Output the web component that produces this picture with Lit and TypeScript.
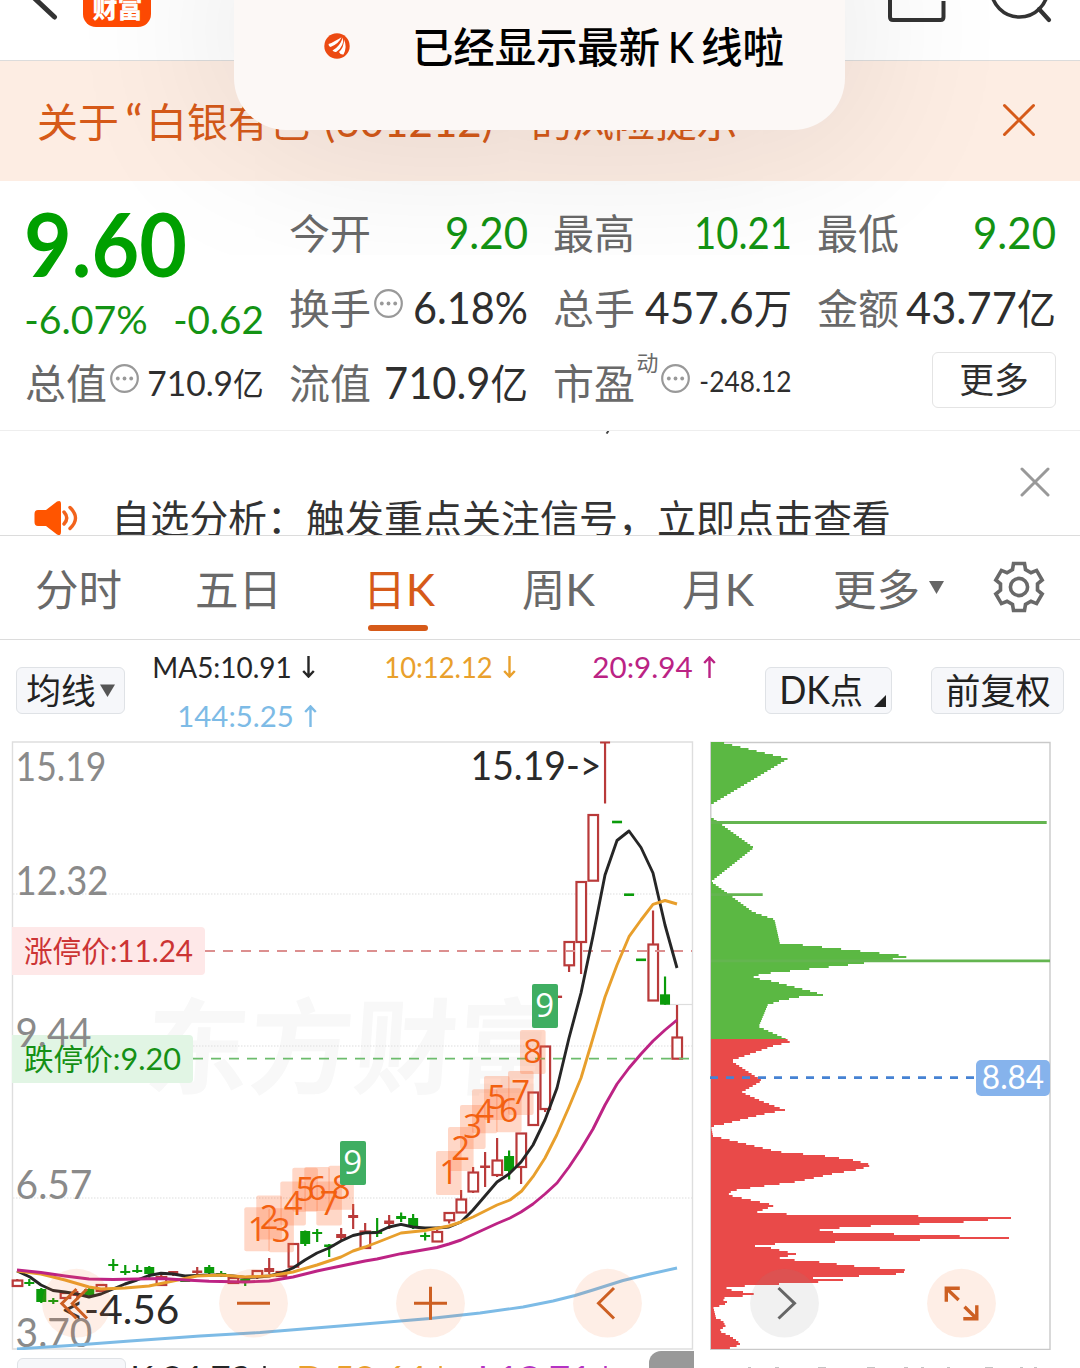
import { LitElement, html, svg, css, nothing } from 'lit';
import { customElement } from 'lit/decorators.js';

interface FitOptions {
  latin?: number;
  cjk?: number;
  weight?: number;
  cls?: string;
}

/** Splits a label into Latin and Han runs, each with its own font size. */
const runs = (text: string, latin: number, cjk: number) =>
  (text.match(/[\u3000-\u9fff\uff00-\uffef]+|[^\u3000-\u9fff\uff00-\uffef]+/g) ?? []).map((part) => {
    const size = /[\u3000-\u9fff\uff00-\uffef]/.test(part) ? cjk : latin;
    return svg`<tspan font-size=${size}>${part}</tspan>`;
  });

/** A label of a fixed width whose baseline is the bottom edge of its box. */
const fit = (text: string, width: number, o: FitOptions = {}) => {
  const latin = o.latin ?? 45;
  const cjk = o.cjk ?? 40.5;
  const pad = latin * 0.022;
  const h = Math.round(latin * 0.72);
  return html`<svg class="fit ${o.cls ?? ''}" width=${width} height=${h}><text x=${-pad} y=${h} font-weight=${o.weight ?? 400} textLength=${width + pad * 2} lengthAdjust="spacingAndGlyphs">${runs(text, latin, cjk)}</text></svg>`;
};

/** The same fitted label, placed at a point of the chart canvas. */
const label = (text: string, x1: number, x2: number, y: number, latin: number, fill: string, cjk = latin) => {
  const pad = latin * 0.035;
  return svg`<text x=${x1 - pad} y=${y} fill=${fill} textLength=${x2 - x1 + pad * 2} lengthAdjust="spacingAndGlyphs">${runs(text, latin, cjk)}</text>`;
};

const arrow = (down: boolean, cls: string) => html`<svg class="arrow ${cls}" width="13" height="22" viewBox="0 0 13 22">
  <path d=${down ? 'M6.5 0V20.5M1.2 15L6.5 20.6L11.8 15' : 'M6.5 22V1.5M1.2 7L6.5 1.4L11.8 7'} fill="none" stroke="currentColor" stroke-width="2.4"/></svg>`;

const dots = html`<svg class="dots" width="29" height="29" viewBox="0 0 29 29">
  <circle cx="14.5" cy="14.5" r="13.3" fill="none" stroke="#999" stroke-width="2.2"/>
  <circle cx="7.8" cy="14.5" r="1.9" fill="#999"/><circle cx="14.5" cy="14.5" r="1.9" fill="#999"/><circle cx="21.2" cy="14.5" r="1.9" fill="#999"/></svg>`;

type Kind = 'h' | 's' | 'g';
/** kind (hollow red, solid red, green), high, body top, body bottom, low */
type Candle = [Kind, number, number, number, number];
const CANDLES: Candle[] = [
  ['h', 1279, 1280.5, 1286, 1287], ['g', 1279, 1282, 1284, 1286], ['g', 1288, 1289, 1302, 1303], ['g', 1298, 1300, 1302, 1304],
  ['h', 1292, 1293, 1298, 1299], ['s', 1291, 1293, 1296, 1300], ['g', 1288, 1289, 1295, 1296], ['h', 1284, 1285, 1291, 1291],
  ['g', 1259, 1264, 1266, 1271], ['g', 1265, 1271, 1273, 1275], ['g', 1265, 1270, 1272, 1273], ['g', 1266, 1267, 1274, 1278],
  ['h', 1274, 1277, 1285, 1285], ['s', 1271, 1271, 1274, 1276], ['g', 1277, 1279, 1282, 1282], ['s', 1267, 1270.5, 1273, 1275],
  ['g', 1265, 1267, 1273, 1274], ['g', 1271, 1273, 1276, 1277], ['h', 1277, 1278, 1283, 1283], ['g', 1276, 1279, 1281, 1286],
  ['h', 1270, 1271, 1277, 1279], ['s', 1258, 1268, 1272, 1274], ['h', 1271, 1272, 1276, 1276], ['h', 1243.5, 1244, 1266.7, 1268],
  ['g', 1230.5, 1231, 1244, 1246], ['g', 1229, 1232, 1234, 1242], ['g', 1244, 1244.5, 1247, 1257], ['s', 1228, 1234, 1238, 1240],
  ['s', 1204, 1215, 1218, 1229], ['h', 1223, 1231.5, 1248, 1249], ['g', 1218, 1231, 1234, 1237], ['s', 1215, 1220.5, 1224, 1229],
  ['g', 1212.5, 1216, 1219, 1222], ['g', 1214, 1218, 1227, 1229], ['g', 1232.5, 1235, 1237, 1240.5], ['h', 1230, 1232, 1241.5, 1242],
  ['h', 1212, 1213, 1220.3, 1223.5], ['h', 1190, 1199.5, 1212.5, 1213], ['h', 1167, 1172.5, 1191.5, 1193], ['s', 1152, 1165.5, 1168, 1187],
  ['h', 1138, 1160.5, 1175, 1177], ['g', 1150.5, 1156, 1171, 1179.5], ['h', 1133, 1133.5, 1167, 1184], ['h', 1092, 1092.5, 1125, 1125],
  ['h', 1046, 1046.5, 1109, 1112], ['s', 996, 995.6, 998, 997], ['h', 941.5, 942, 965.3, 972], ['h', 881, 882, 942, 974],
  ['h', 814.5, 815, 880.7, 881], ['s', 742, 741.5, 743.5, 803.5], ['g', 821, 820.7, 823.3, 823], ['g', 894, 893.4, 896, 895],
  ['g', 959, 958.5, 961.1, 960], ['h', 910.5, 944.5, 1000.5, 1001], ['g', 976.5, 994.3, 1004.7, 1004.7], ['h', 1005, 1037.5, 1058.7, 1059],
];

const MA5 = '17,1271 30,1277 41,1285 53,1290.5 65,1292 77,1294 89,1297 101,1294 113,1289 125,1284 137,1280 149,1275.5 161,1273.3 173,1274 185,1276 197,1275.5 209,1275 221,1275 233,1276 245,1277.5 257,1277 269,1276 281,1273 293,1268 305,1260 317,1253 329,1248 341,1241 353,1235.5 365,1232.8 377,1232.5 389,1227 401,1224.3 413,1227 425,1228 437,1228 449,1227 461,1222 473,1210 485,1196 497,1182 509,1174 521,1162 533,1145 545,1120 557,1088 569,1038 581,993 593,936 605,875 617,840.5 629,831 641,847.5 653,873 665,925 677,968';
const MA10 = '17,1271 41,1274 65,1280 89,1287 101,1289 125,1288 149,1286 173,1281 197,1276 221,1275 245,1277 269,1276 293,1272 317,1265 341,1257 353,1251 365,1247 377,1242.5 401,1233 425,1230.5 449,1226 461,1222 473,1217 485,1211 497,1205 510,1200 521.7,1191 533,1176.7 545,1158 556.7,1135 569,1107 581,1078 593,1038 605,997 617,965 629,936.7 641,920 653,904.3 665,900.5 677,904';
const MA20 = '17,1270 41,1272.5 65,1276 89,1279 113,1279.5 137,1279 161,1278.5 185,1280 209,1281.3 245,1282 269,1281 293,1277 317,1271 341,1266 365,1261 377,1259 401,1253.7 437,1247.5 449,1244 461,1240 473,1234.5 497,1223.5 510,1218 521,1212 533,1204 545,1194 557,1183 569,1167 581,1149 593,1129 605,1105 617,1084 629,1068 641,1054 653,1041 665,1030 677,1020';
const MA144 = '17,1349 70,1345.5 130,1341 200,1336 260,1332.5 340,1326 430,1318.5 480,1313 523,1307 553,1301 575,1295.5 593,1290 623,1280.5 650,1274 677,1268';

/** Sequence marks: digit, left edge, top edge. */
const MARKS: [string, number, number][] = [
  ['1', 244.3, 1207.3], ['2', 256.3, 1195.5], ['3', 268.3, 1208.3], ['4', 280.3, 1181.5], ['5', 292.3, 1167.7], ['6', 304.3, 1167], ['7', 316.3, 1181.5], ['8', 328.3, 1165.7], ['9', 340, 1141],
  ['1', 436, 1151], ['2', 448, 1127], ['3', 460, 1105], ['4', 472, 1089.3], ['5', 484, 1076], ['6', 496, 1088.3], ['7', 508, 1071], ['8', 520, 1030], ['9', 532, 984],
];

/** Chip distribution outline: price row (y) and bar length. */
const CHIPS: [number, number][] = [
  [742, 9], [758.7, 77], [804.7, 0], [817, 0], [847.7, 43], [881.7, 0], [883, 2], [893, 16], [912, 42], [919.5, 63.5], [944, 69], [944.6, 88], [956.3, 200],
  [958.7, 184], [963, 153], [965, 137], [974, 50], [977.7, 41], [980.7, 59], [992, 103], [995, 112], [997, 88], [1001, 68], [1005, 56.7], [1026.7, 47.7], [1036.7, 70],
  [1041.7, 80], [1046, 62], [1053, 42], [1060.7, 20], [1080.7, 51], [1092.3, 30.7], [1101.7, 52], [1110, 74], [1114.3, 52], [1125, 9], [1126.5, 0],
  [1136, 2], [1151.7, 67], [1156, 114], [1160, 142], [1165, 161], [1169.3, 149], [1174, 121], [1181.7, 86], [1186.7, 48], [1190.7, 21], [1195, 17], [1205.3, 64],
  [1212.5, 45], [1213.7, 50], [1215, 161], [1218, 300], [1220.7, 269], [1223, 240], [1225, 177], [1227.5, 134], [1229.5, 112], [1231, 102], [1233, 142], [1235, 224],
  [1238, 298], [1240, 209], [1242, 124], [1244, 64], [1246, 44], [1248, 60], [1254, 85], [1258.7, 66], [1261.5, 104], [1264.5, 130], [1267, 152], [1269.5, 194],
  [1272, 193], [1274, 185], [1276, 148], [1278, 102], [1280, 132], [1282.5, 101], [1284.5, 57], [1286.5, 26], [1288.5, 12], [1292, 32], [1294.8, 47], [1297, 19],
  [1299, 8], [1301, 17], [1304, 14], [1308, 2.5], [1318, 5], [1321, 12], [1326, 14.5], [1331, 8], [1336, 19], [1340, 25], [1343.7, 29.5], [1346.5, 24.7], [1349, 15],
];
const chipPath = (from: number, to: number) => {
  let d = `M711 ${from}`;
  for (let y = from; y < to; y += 2) {
    const mid = y + 1;
    let i = CHIPS.findIndex((p) => p[0] > mid);
    if (i < 1) i = i === 0 ? 1 : CHIPS.length - 1;
    const [y0, w0] = CHIPS[i - 1];
    const [y1, w1] = CHIPS[i];
    const w = Math.max(0, w0 + ((w1 - w0) * (mid - y0)) / (y1 - y0));
    d += `H${(711 + w).toFixed(1)}V${Math.min(y + 2, to)}`;
  }
  return `${d}H711Z`;
};

@customElement('kline-canvas')
export class KlineCanvas extends LitElement {
  static styles = css`
    :host { display: block; }
    svg { display: block; font-family: Lato, "Noto Sans CJK SC", sans-serif; }
    .mark { font-family: "Open Sans", Lato, sans-serif; }
    .water { font-family: "Noto Sans CJK SC", sans-serif; font-weight: 700; }
  `;

  private candle([kind, hi, top, bot, lo]: Candle, i: number) {
    const x = 17.3 + i * 11.995;
    const color = kind === 'g' ? '#0a9b0a' : '#b93a3a';
    const wick = svg`<path d=${kind === 'h' ? `M${x} ${hi}V${top}M${x} ${bot}V${lo}` : `M${x} ${hi}V${lo}`} stroke=${color} stroke-width="2.2"/>`;
    const body = kind === 'h'
      ? svg`<rect x=${x - 4.6} y=${top} width="9.6" height=${bot - top} fill="#fff" stroke=${color} stroke-width="2.2"/>`
      : svg`<rect x=${x - 5} y=${top} width="10" height=${bot - top} fill=${color}/>`;
    return svg`${wick}${body}`;
  }

  private mark([n, x, y]: [string, number, number]) {
    const last = n === '9';
    return svg`<rect x=${x} y=${y} width=${last ? 26 : 25.6} height="44" rx="2" fill=${last ? '#3fae62' : '#ff6a30'} fill-opacity=${last ? 1 : 0.27}/>
      <text class="mark" x=${x + 12.8} y=${y + 33.3} text-anchor="middle" font-size="33" fill=${last ? '#fff' : '#f2600f'}>${n}</text>`;
  }

  render() {
    return html`<svg width="1080" height="610" viewBox="0 740 1080 610">
      <text class="water" x="143" y="1086" font-size="104" fill="#f8f8f8" transform="skewX(-4)" style="transform-origin:143px 1086px" textLength="416">东方财富</text>
      <path d="M12.5 742H692.5V1349H12.5Z" fill="none" stroke="#dedede" stroke-width="1.4"/>
      <path d="M13 894H692M13 1046H692M13 1198H692" stroke="#ddd" stroke-width="1.2" stroke-dasharray="1.5 1.5"/>
      ${label('15.19', 17, 105, 781, 40.5, '#8a8a8a')}
      ${label('12.32', 17, 107, 895, 40.5, '#8a8a8a')}
      ${label('6.57', 17, 91, 1199, 40.5, '#8a8a8a')}
      ${label('3.70', 17, 91, 1347, 40.5, '#8a8a8a')}
      <path d="M12 927H201a4 4 0 0 1 4 4V971a4 4 0 0 1 -4 4H12Z" fill="#fee8e8"/>
      <path d="M12 1035H189a4 4 0 0 1 4 4V1079a4 4 0 0 1 -4 4H12Z" fill="#e1f5e4"/>
      ${label('9.44', 17, 90, 1046.5, 40.5, '#8a8a8a')}
      ${label('涨停价:11.24', 25, 192, 961.5, 30.5, '#cc3434', 29.5)}
      ${label('跌停价:9.20', 25, 180, 1069.5, 30.5, '#159015', 29.5)}
      <path d="M665 1004.5H692" stroke="#ddd" stroke-width="1.2"/>
      ${CANDLES.map((c, i) => this.candle(c, i))}
      <path d="M205 951H692" stroke="#dc8f8f" stroke-width="1.8" stroke-dasharray="10 8"/>
      <path d="M193 1058.7H692" stroke="#6cbc6c" stroke-width="1.8" stroke-dasharray="10 8"/>
      ${MARKS.map((m) => this.mark(m))}
      <g fill="none" stroke-width="2.9" stroke-linejoin="round">
        <polyline points=${MA144} stroke="#7dbbe6"/>
        <polyline points=${MA5} stroke="#262626"/>
        <polyline points=${MA10} stroke="#e89f2c"/>
        <polyline points=${MA20} stroke="#bd2384"/>
      </g>
      ${label('15.19->', 472, 600, 779.5, 40.5, '#2a2a2a')}
      ${label('<-4.56', 62, 178, 1324, 40.5, '#2a2a2a')}

      <path d="M710.8 742.5H1050V1349.5H710.8Z" fill="none" stroke="#c9c9c9" stroke-width="1.4"/>
      <path d=${chipPath(742, 1039)} fill="#5bb843"/>
      <path d=${chipPath(1039, 1349)} fill="#e94a49"/>
      <path d="M711 822.5H1046.7M711 894.7H762.7M711 960.8H1050" stroke="#64b550" stroke-width="2.8"/>
      <path d="M710 1077.7H976" stroke="#4682d3" stroke-width="2.8" stroke-dasharray="8 8"/>
      <rect x="976" y="1060" width="74" height="36" rx="5" fill="#86b3ec"/>
      ${label('8.84', 983, 1043, 1089, 33, '#fff')}

      <g fill="#fa7332" fill-opacity="0.12">
        <circle cx="76.5" cy="1303.2" r="34.4"/><circle cx="253.5" cy="1303.2" r="34.4"/><circle cx="430.5" cy="1303.2" r="34.4"/>
        <circle cx="607.5" cy="1303.2" r="34.4"/><circle cx="961.5" cy="1303.2" r="34.4"/>
      </g>
      <circle cx="784.5" cy="1303.2" r="34.4" fill="#888" fill-opacity="0.12"/>
      <g fill="none" stroke="#cd5f22" stroke-width="3">
        <path d="M76.5 1289L61.8 1303.5L76.5 1318.5M87 1289L72.3 1303.5L87 1318.5"/>
        <path d="M237 1303.2H270M414 1303.2H447M430.5 1286.7V1319.7"/>
        <path d="M614 1288L598.5 1303.3L614 1318.5"/>
        <path d="M959.8 1288.3H946.3V1301.8M946.3 1288.3L958.6 1300M963.3 1318.8H976.8V1305.3M976.8 1318.8L964.5 1306.8" stroke-width="3.4"/>
      </g>
      <path d="M778.5 1288L794.5 1303.3L778.5 1318.5" fill="none" stroke="#666" stroke-width="3"/>
    </svg>`;
  }
}

@customElement('app-root')
export class AppRoot extends LitElement {
  static styles = css`
    :host { display: block; position: relative; width: 1080px; height: 1368px; overflow: hidden; background: #fff; font-family: Lato, "Noto Sans CJK SC", sans-serif; }
    * { box-sizing: border-box; }
    svg { display: block; flex: none; }
    .fit { overflow: visible; fill: currentColor; font-family: Lato, "Noto Sans CJK SC", sans-serif; }
    .row { display: flex; align-items: flex-end; }

    .top { display: flex; height: 61px; border-bottom: 1px solid #dcdcdc; align-items: flex-start; }
    .back { margin-left: 30px; }
    .logo { display: flex; justify-content: center; align-items: flex-end; width: 68px; height: 27px; margin-left: 23px; padding-bottom: 9px; background: #ff4a03; border-radius: 0 0 13px 13px; color: #fff; overflow: hidden; }
    .tools { display: flex; gap: 44px; margin-left: auto; padding-right: 26px; }

    .banner { display: flex; justify-content: space-between; height: 120px; padding: 0 44px 0 38px; background: #fdede3; color: #d65a19; }
    .banner .row { height: 76px; }
    .banner .close { margin-top: 42px; }

    .quote { display: flex; gap: 27px; height: 250px; padding-left: 26px; border-bottom: 1px solid #eee; color: #2e2e2e; }
    .col { width: 237px; flex: none; }
    .cell { display: flex; align-items: flex-end; justify-content: space-between; height: 75px; }
    .cell.first { height: 68px; }
    .cell.price { height: 96px; justify-content: flex-start; }
    .cell.change { height: 57px; margin-left: -1px; }
    .cell.cap { height: 65px; }
    .name { display: flex; align-items: flex-end; gap: 4px; color: #696969; }
    .name.pe { gap: 3px; }
    .name .sup { margin-bottom: 28px; }
    .dots { margin-bottom: 6px; }
    .green { color: #139313; }
    .big { color: #00a000; }
    .up3 { margin-bottom: 3px; }
    .up6 { margin-bottom: 7px; }
    .more { display: flex; justify-content: center; align-items: flex-end; width: 124px; height: 56px; margin: 0 -1px -9px auto; padding-bottom: 14px; border: 1px solid #e4e4e4; border-radius: 6px; }

    .notice { display: flex; height: 105px; border-bottom: 1px solid #dcdcdc; overflow: hidden; padding-left: 34px; color: #333; }
    .notice .speaker { margin-top: 69px; }
    .notice .row { height: 102px; margin-left: 33px; }
    .notice .close { margin: 36px 30px 0 auto; }
    .speck { position: absolute; left: 603px; top: 431px; width: 8px; height: 3px; }

    .tabs { display: grid; grid-template-columns: 160px 172px 155px 160px 151px 95px 64px auto; height: 104px; padding-left: 36px; border-bottom: 1px solid #dcdcdc; color: #696969; }
    .tab { display: flex; flex-direction: column; justify-content: flex-end; height: 70px; }
    .tab.on { height: 95px; color: #d65a19; }
    .tab .nudge { margin-left: -4px; }
    .line { width: 60px; height: 6px; margin-top: 19px; border-radius: 3px; background: #d65a19; }
    .tri { margin-top: 45px; }
    .gear { margin-top: 25px; }

    .bar { display: flex; align-items: flex-start; height: 100px; padding: 0 16px; }
    .btn { display: flex; align-items: flex-end; height: 47px; margin-top: 27px; padding: 0 0 9px 10px; border: 1px solid #dfe2e6; border-radius: 6px; background: #f6f7fa; color: #222; }
    .ma-btn { width: 109px; gap: 5px; }
    .dk { width: 128px; gap: 3px; padding-left: 14px; }
    .fq { width: 133px; margin-left: 39px; padding-left: 14px; }
    .mas { display: grid; grid-template-columns: 232px 208px 172px; grid-template-rows: 38px 49px; width: 612px; margin-left: 28px; }
    .ma { display: flex; align-items: flex-end; gap: 11px; }
    .ma.second { margin-left: 25px; }
    .k { color: #262626; } .o { color: #e9a02c; } .p { color: #bb2384; } .b { color: #7dbbe6; } .v { color: #b433c4; }

    .foot { display: flex; height: 18px; overflow: hidden; align-items: flex-start; }
    .foot .box { width: 109px; height: 30px; margin: 8px 5px 0 17px; border: 1px solid #dfe2e6; border-radius: 6px; background: #f6f7fa; }
    .foot .ind { margin: 16px 26px 0 0; display: flex; gap: 8px; }
    .foot .tab-grey { width: 45px; height: 30px; margin: 1px 0 0 11px; background: #999; border-radius: 12px 0 0 0; }
    .foot .specks { margin: 17px 0 0 50px; }

    .toast { position: absolute; left: 234px; top: -70px; width: 611px; height: 200px; border-radius: 52px; background: #fcf8f6; box-shadow: 0 0 180px rgba(0, 0, 0, 0.12); color: #000; display: flex; align-items: flex-end; padding: 0 0 67px 90px; }
    .toast .mark { margin: 0 63px 4px 0; }
    .toast .k1 { margin: 0 9px 0 10px; }
    .gap5 { width: 5px; } .gap8 { width: 8px; } .gap16 { width: 16px; }
    .tick { margin: 0 0 -3px 9px; }
  `;

  private stat(name: string, value: string, width: number, cls = '', extra: unknown = nothing, pos = '') {
    return html`<div class="cell ${pos}"><div class="name">${fit(name, 80)}${extra}</div>${fit(value, width, { cls })}</div>`;
  }

  render() {
    return html`
      <header class="top">
        <svg class="back" width="30" height="22"><path d="M1 -5L24.5 17" stroke="#333" stroke-width="5" stroke-linecap="round"/></svg>
        <div class="logo">${fit('财富', 49, { latin: 25, cjk: 26, weight: 800 })}</div>
        <div class="tools">
          <svg width="58" height="24"><path d="M2 -4V17Q2 20 5 20H52.5Q55.5 20 55.5 17V1" fill="none" stroke="#333" stroke-width="4"/></svg>
          <svg width="64" height="24"><circle cx="29.5" cy="-11.3" r="28.3" fill="none" stroke="#333" stroke-width="3.6"/><path d="M49 9L59 20" stroke="#333" stroke-width="4.2" stroke-linecap="round"/></svg>
        </div>
      </header>

      <section class="banner">
        <div class="row">${fit('关于', 80, { cjk: 40 })}<span class="gap8"></span>${fit('“', 16)}<span class="gap5"></span>${fit('白银有色', 162, { cjk: 40 })}<span class="gap16"></span>${fit('(601212)', 167, { latin: 43 })}<span class="gap8"></span>${fit('”', 16)}<span class="gap16"></span>${fit('的风险提示', 205, { cjk: 40 })}</div>
        <svg class="close" width="34" height="34"><path d="M2.5 2.5L31.5 31.5M31.5 2.5L2.5 31.5" stroke="#d65a19" stroke-width="3" stroke-linecap="round"/></svg>
      </section>

      <section class="quote">
        <div class="col">
          <div class="cell price">${fit('9.60', 159, { latin: 88, weight: 700, cls: 'big' })}</div>
          <div class="cell change">${fit('-6.07%', 122, { latin: 38, cls: 'green' })}${fit('-0.62', 89, { latin: 38, cls: 'green' })}</div>
          <div class="cell cap"><div class="name">${fit('总值', 80)}${dots}</div>${fit('710.9亿', 115, { latin: 35, cjk: 32, cls: 'up3' })}</div>
        </div>
        <div class="col">
          ${this.stat('今开', '9.20', 81, 'green', nothing, 'first')}
          ${this.stat('换手', '6.18%', 113, '', dots)}
          ${this.stat('流值', '710.9亿', 142)}
        </div>
        <div class="col">
          ${this.stat('最高', '10.21', 96, 'green', nothing, 'first')}
          ${this.stat('总手', '457.6万', 145)}
          <div class="cell"><div class="name pe">${fit('市盈', 80)}${fit('动', 21, { latin: 21, cjk: 21.5, cls: 'sup' })}${dots}</div>${fit('-248.12', 91, { latin: 28.5, cls: 'up6' })}</div>
        </div>
        <div class="col">
          ${this.stat('最低', '9.20', 81, 'green', nothing, 'first')}
          ${this.stat('金额', '43.77亿', 148)}
          <div class="cell"><div class="more">${fit('更多', 68, { latin: 34, cjk: 35 })}</div></div>
        </div>
      </section>
      <svg class="speck"><path d="M5.5 0L3.5 2.5" stroke="#444" stroke-width="2"/></svg>

      <section class="notice">
        <svg class="speaker" width="45" height="36" viewBox="0 0 45 36"><path d="M4 10H12L23 1.5Q27 -0.5 27 4V32Q27 36.5 23 34.5L12 26H4Q0.5 26 0.5 22V14Q0.5 10 4 10Z" fill="#ff5500"/>
          <path d="M30 12Q35.5 18 30 24M36 7.5Q47 18 36 28.5" fill="none" stroke="#f2631c" stroke-width="3.4" stroke-linecap="round"/></svg>
        <div class="row">${fit('自选分析：触发重点关注信号，立即点击查看', 778, { latin: 39, cjk: 39 })}</div>
        <svg class="close" width="30" height="30"><path d="M2 2L28 28M28 2L2 28" stroke="#999" stroke-width="3" stroke-linecap="round"/></svg>
      </section>

      <nav class="tabs">
        <div class="tab">${fit('分时', 85, { cjk: 43.5 })}</div>
        <div class="tab">${fit('五日', 85, { cjk: 43.5 })}</div>
        <div class="tab on">${fit('日K', 70, { cjk: 43.5, cls: 'nudge' })}<div class="line"></div></div>
        <div class="tab">${fit('周K', 71, { cjk: 43.5 })}</div>
        <div class="tab">${fit('月K', 70, { cjk: 43.5 })}</div>
        <div class="tab">${fit('更多', 85, { cjk: 43.5 })}</div>
        <svg class="tri" width="15" height="13"><path d="M0 0H15L7.5 13Z" fill="#666"/></svg>
        <svg class="gear" width="52" height="52" viewBox="-26 -26 52 52"><g fill="none" stroke="#696969" stroke-width="3.6"><circle r="8.6"/>
          <path d="M-5.5 -23.5H5.5L6.5 -17.5L12 -14.3L17.6 -16.6L23.2 -7L18.5 -3.2V3.2L23.2 7L17.6 16.6L12 14.3L6.5 17.5L5.5 23.5H-5.5L-6.5 17.5L-12 14.3L-17.6 16.6L-23.2 7L-18.5 3.2V-3.2L-23.2 -7L-17.6 -16.6L-12 -14.3L-6.5 -17.5Z"/></g></svg>
      </nav>

      <section class="bar">
        <div class="btn ma-btn">${fit('均线', 68, { latin: 34, cjk: 35 })}<svg width="15" height="20"><path d="M0 0.5H15L7.5 13Z" fill="#555"/></svg></div>
        <div class="mas">
          <div class="ma k">${fit('MA5:10.91', 138, { latin: 29.5 })}${arrow(true, 'k')}</div>
          <div class="ma o">${fit('10:12.12', 107, { latin: 29.5 })}${arrow(true, 'o')}</div>
          <div class="ma p">${fit('20:9.94', 99, { latin: 29.5 })}${arrow(false, 'p')}</div>
          <div class="ma b second">${fit('144:5.25', 115, { latin: 29.5 })}${arrow(false, 'b')}</div>
        </div>
        <div class="btn dk">${fit('DK点', 82, { latin: 38, cjk: 35 })}<svg class="tick" width="12" height="12"><path d="M12 0V12H0Z" fill="#222"/></svg></div>
        <div class="btn fq">${fit('前复权', 104, { latin: 34, cjk: 35 })}</div>
      </section>

      <kline-canvas></kline-canvas>

      <footer class="foot">
        <div class="box"></div>
        <div class="ind k">${fit('K:24.73', 119, { latin: 29.5 })}${arrow(true, 'k')}</div>
        <div class="ind o">${fit('D:50.64', 129, { latin: 29.5 })}${arrow(true, 'o')}</div>
        <div class="ind v">${fit('J:12.71', 118, { latin: 29.5 })}${arrow(true, 'v')}</div>
        <div class="tab-grey"></div>
        <svg class="specks" width="320" height="2"><path d="M4 1H7M31 1H35M74 1H82M123 1H131M160 1H164M177 1H180M203 1H206M241 1H249M276 1H279M290 1H293" stroke="#c4c4c4" stroke-width="2"/></svg>
      </footer>

      <div class="toast">
        <svg class="mark" width="26" height="26" viewBox="0 0 26 26"><circle cx="13" cy="13" r="12.7" fill="#ec4a12"/>
          <path d="M4.5 11Q10 9 17.5 4.2Q15 10.5 6.5 14Q4.5 13.5 4.5 11Z" fill="#fff"/><path d="M8.5 17.5Q16 13.5 18.8 4.5Q20.5 13 12.5 18.8Q10 19.5 8.5 17.5Z" fill="#fff"/><path d="M15 19Q20 14.5 20 6.5Q23.5 14 19.5 21.5Q16.5 22 15 19Z" fill="#fff"/></svg>
        ${fit('已经显示最新', 246, { cjk: 41.5, weight: 500 })}
        ${fit('K', 24, { latin: 43, weight: 500, cls: 'k1' })}
        ${fit('线啦', 81, { cjk: 41.5, weight: 500 })}
      </div>
    `;
  }
}
